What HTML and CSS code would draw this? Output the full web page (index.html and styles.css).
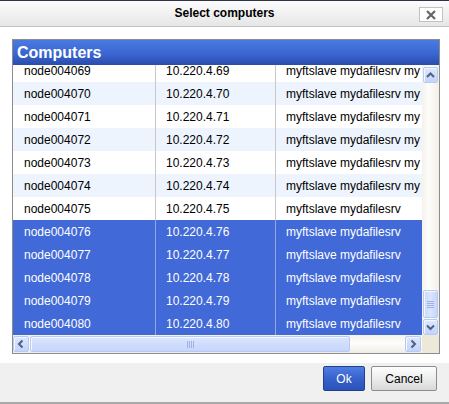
FILE: index.html
```html
<!DOCTYPE html>
<html>
<head>
<meta charset="utf-8">
<link rel="stylesheet" href="styles.css">
</head>
<body>
<div class="dialog">
  <div class="titlebar">
    <span></span>
    <span class="title">Select computers</span>
    <span class="close"><svg width="12" height="10" viewBox="0 0 12 10"><path d="M2 1L10 9M10 1L2 9" stroke="#666" stroke-width="2.2" fill="none"/></svg></span>
  </div>
  <div class="content">
    <div class="grid">
      <div class="gheader">Computers</div>
      <div class="gbody">
        <div class="rows">
          <div class="inner">
            <div class="row"><div class="c c1">node004069</div><div class="c c2">10.220.4.69</div><div class="c c3">myftslave mydafilesrv my</div></div>
            <div class="row alt"><div class="c c1">node004070</div><div class="c c2">10.220.4.70</div><div class="c c3">myftslave mydafilesrv my</div></div>
            <div class="row"><div class="c c1">node004071</div><div class="c c2">10.220.4.71</div><div class="c c3">myftslave mydafilesrv my</div></div>
            <div class="row alt"><div class="c c1">node004072</div><div class="c c2">10.220.4.72</div><div class="c c3">myftslave mydafilesrv my</div></div>
            <div class="row"><div class="c c1">node004073</div><div class="c c2">10.220.4.73</div><div class="c c3">myftslave mydafilesrv my</div></div>
            <div class="row alt"><div class="c c1">node004074</div><div class="c c2">10.220.4.74</div><div class="c c3">myftslave mydafilesrv my</div></div>
            <div class="row"><div class="c c1">node004075</div><div class="c c2">10.220.4.75</div><div class="c c3">myftslave mydafilesrv</div></div>
            <div class="row sel"><div class="c c1">node004076</div><div class="c c2">10.220.4.76</div><div class="c c3">myftslave mydafilesrv</div></div>
            <div class="row sel"><div class="c c1">node004077</div><div class="c c2">10.220.4.77</div><div class="c c3">myftslave mydafilesrv</div></div>
            <div class="row sel"><div class="c c1">node004078</div><div class="c c2">10.220.4.78</div><div class="c c3">myftslave mydafilesrv</div></div>
            <div class="row sel"><div class="c c1">node004079</div><div class="c c2">10.220.4.79</div><div class="c c3">myftslave mydafilesrv</div></div>
            <div class="row sel"><div class="c c1">node004080</div><div class="c c2">10.220.4.80</div><div class="c c3">myftslave mydafilesrv</div></div>
          </div>
        </div>
        <div class="vscroll">
          <div class="sbtn up"><svg width="13" height="14" viewBox="0 0 13 14"><path d="M3 9L6.5 5.5L10 9" stroke="#4d6185" stroke-width="2" fill="none"/></svg></div>
          <div class="vspace"></div>
          <div class="vthumb"><svg width="9" height="8" viewBox="0 0 9 8"><path d="M1 1.5H8M1 3.5H8M1 5.5H8M1 7.5H8" stroke="#9fb2e4" stroke-width="1" fill="none"/></svg></div>
          <div class="sbtn down"><svg width="13" height="14" viewBox="0 0 13 14"><path d="M3 5.5L6.5 9L10 5.5" stroke="#4d6185" stroke-width="2" fill="none"/></svg></div>
        </div>
      </div>
      <div class="hscroll">
        <div class="sbtn left"><svg width="14" height="14" viewBox="0 0 14 14"><path d="M8.5 3.5L5 7L8.5 10.5" stroke="#4d6185" stroke-width="2" fill="none"/></svg></div>
        <div class="hthumb"><svg width="8" height="9" viewBox="0 0 8 9"><path d="M1.5 1V8M3.5 1V8M5.5 1V8M7.5 1V8" stroke="#9fb2e4" stroke-width="1" fill="none"/></svg></div>
        <div class="hspace"></div>
        <div class="sbtn right"><svg width="14" height="14" viewBox="0 0 14 14"><path d="M5.5 3.5L9 7L5.5 10.5" stroke="#4d6185" stroke-width="2" fill="none"/></svg></div>
        <div class="corner"></div>
      </div>
    </div>
  </div>
  <div class="footer">
    <button class="btn ok">Ok</button>
    <button class="btn cancel">Cancel</button>
  </div>
</div>
</body>
</html>
```
FILE: styles.css
```css
* { box-sizing: border-box; }
html, body { margin: 0; padding: 0; }
body {
  width: 449px;
  height: 404px;
  overflow: hidden;
  background: #fff;
  font-family: "Liberation Sans", Arial, sans-serif;
  font-size: 12px;
  color: #000;
}
.dialog {
  display: flex;
  flex-direction: column;
  height: 404px;
  border-top: 1px solid #2c3446;
}
.titlebar {
  flex: none;
  height: 26px;
  border-bottom: 1px solid #c4c4c4;
  background: linear-gradient(#fcfcfc, #e6e6e6);
  display: grid;
  grid-template-columns: 1fr auto 1fr;
  align-items: center;
}
.title {
  font-weight: bold;
  font-size: 12px;
  padding-bottom: 1px;
}
.close {
  justify-self: end;
  align-self: start;
  margin-top: 6px;
  margin-right: 6px;
  width: 24px;
  height: 15px;
  background: #fff;
  border: 1px solid #c2c2c2;
  display: flex;
  align-items: center;
  justify-content: center;
}
.content {
  flex: none;
  height: 336px;
  padding: 12px 9px 9px 12px;
}
.grid {
  height: 315px;
  border: 1px solid #8c8c8c;
  display: flex;
  flex-direction: column;
}
.gheader {
  flex: none;
  height: 25px;
  background: linear-gradient(#4a7ae0, #3a66d2 55%, #2a4cab);
  color: #fff;
  font-weight: bold;
  font-size: 16px;
  padding-left: 4px;
  display: flex;
  align-items: center;
}
.gbody {
  flex: none;
  height: 270px;
  display: flex;
}
.rows {
  flex: 1;
  min-width: 0;
  overflow: hidden;
}
.inner { margin-top: -6px; }
.row {
  height: 23px;
  display: flex;
  background: #fff;
}
.row.alt { background: #edf4fd; }
.row.sel { background: #4169d7; color: #fff; }
.c {
  display: flex;
  align-items: center;
  white-space: nowrap;
  overflow: hidden;
}
.c1 { width: 143px; flex: none; padding-left: 11px; border-right: 1px solid #c8c8c8; }
.c2 { width: 120px; flex: none; padding-left: 10px; border-right: 1px solid #c8c8c8; }
.c3 { flex: 1; min-width: 0; padding-left: 10px; }
.row.sel .c1, .row.sel .c2 { border-right-color: #93a8e2; }
.vscroll {
  flex: none;
  width: 17px;
  display: flex;
  flex-direction: column;
  align-items: center;
  background: linear-gradient(to right, #f4f2ea, #fdfdfb 40%, #f1efe6);
  padding: 2px 0 0 0;
}
.sbtn {
  flex: none;
  width: 15px;
  height: 16px;
  border: 1px solid #b8c9f2;
  border-radius: 2px;
  background: linear-gradient(#dde7fe, #c3d3fa);
  box-shadow: inset 1px 1px 0 #f4f7ff;
  display: flex;
  align-items: center;
  justify-content: center;
}
.vspace { flex: 1; }
.vthumb {
  flex: none;
  width: 15px;
  height: 28px;
  margin-bottom: 1px;
  border: 1px solid #b8c9f2;
  border-radius: 2px;
  background: linear-gradient(to right, #c9d8fc, #dbe5fe 50%, #c6d5fb);
  box-shadow: inset 1px 1px 0 #f4f7ff;
  display: flex;
  align-items: center;
  justify-content: center;
}
.hscroll {
  flex: none;
  height: 18px;
  display: flex;
  align-items: center;
  background: linear-gradient(#f4f2ea, #fdfdfb 45%, #f0eee5);
}
.hscroll .sbtn { width: 16px; height: 16px; }
.hthumb {
  flex: none;
  width: 320px;
  height: 16px;
  margin-left: 1px;
  border: 1px solid #b8c9f2;
  border-radius: 2px;
  background: linear-gradient(#dbe5fe, #c6d5fb);
  box-shadow: inset 1px 1px 0 #f4f7ff;
  display: flex;
  align-items: center;
  justify-content: center;
}
.hspace { flex: 1; }
.corner {
  flex: none;
  width: 17px;
  height: 18px;
  margin-left: 1px;
  background: #ece9d8;
}
.footer {
  flex: none;
  height: 41px;
  background: #f0f0f0;
  border-bottom: 2px solid #a9a9a9;
  display: flex;
  justify-content: flex-end;
  align-items: flex-start;
  gap: 6px;
  padding: 3px 12px 0 0;
}
.btn {
  height: 25px;
  margin: 0;
  padding: 0;
  font-family: "Liberation Sans", Arial, sans-serif;
  font-size: 12px;
  border-radius: 2px;
}
.ok {
  width: 42px;
  color: #fff;
  border: 1px solid #23408f;
  background: linear-gradient(#4f7ee3, #3862cc 50%, #2b52b4);
}
.cancel {
  width: 66px;
  color: #000;
  border: 1px solid #8c8c8c;
  background: linear-gradient(#fefefe, #ececec 50%, #d9d9d9);
}
```
